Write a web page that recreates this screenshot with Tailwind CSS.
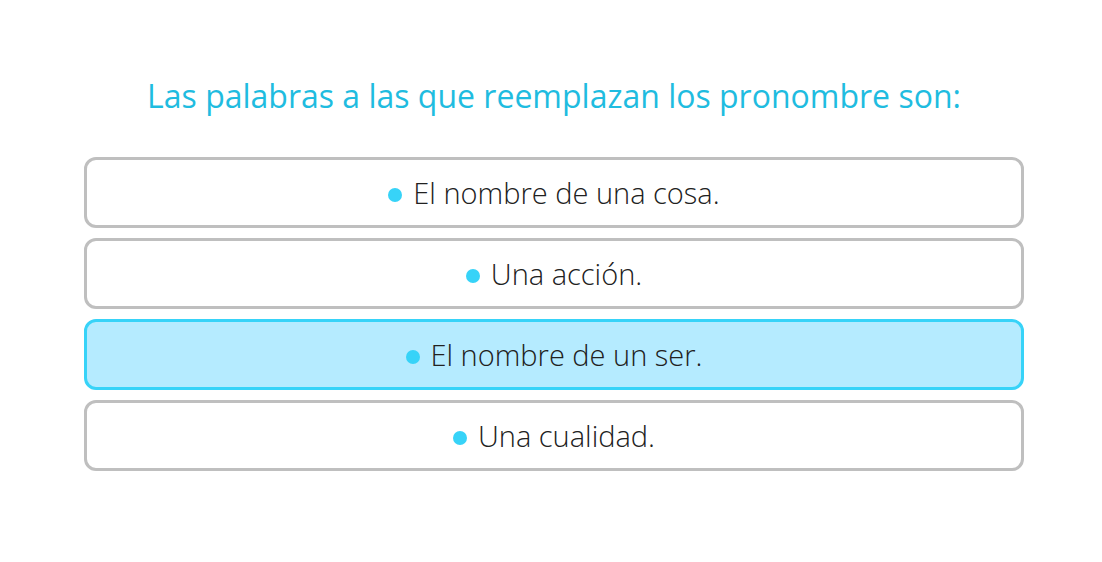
<!DOCTYPE html>
<html lang="es">
<head>
<meta charset="utf-8">
<title>Pronombres</title>
<script src="https://cdn.jsdelivr.net/npm/@tailwindcss/browser@4"></script>
</head>
<body class="bg-white font-['Open_Sans','Noto_Sans',sans-serif] text-[#212121]">
<main class="pt-[72px] pr-[78px] pl-[84px]">
<h1 class="text-center text-[32px] leading-[48px] text-[#1fbce0]">Las palabras a las que reemplazan los pronombre son:</h1>
<div class="mt-[37px] flex flex-col gap-[10px]">
<button type="button" class="flex w-full items-center justify-center gap-[11px] rounded-[12px] border-3 border-[#bfbfbf] bg-white py-[10px] text-[29px] leading-[45px] font-[350]"><span class="mt-[5px] size-[14px] rounded-full bg-[#37d3f8]"></span><span>El nombre de una cosa.</span></button>
<button type="button" class="flex w-full items-center justify-center gap-[11px] rounded-[12px] border-3 border-[#bfbfbf] bg-white py-[10px] text-[29px] leading-[45px] font-[350]"><span class="mt-[5px] size-[14px] rounded-full bg-[#37d3f8]"></span><span>Una acción.</span></button>
<button type="button" aria-pressed="true" class="flex w-full items-center justify-center gap-[11px] rounded-[12px] border-3 border-[#37d3f8] bg-[#b5ebff] py-[10px] text-[29px] leading-[45px] font-[350]"><span class="mt-[5px] size-[14px] rounded-full bg-[#37d3f8]"></span><span>El nombre de un ser.</span></button>
<button type="button" class="flex w-full items-center justify-center gap-[11px] rounded-[12px] border-3 border-[#bfbfbf] bg-white py-[10px] text-[29px] leading-[45px] font-[350]"><span class="mt-[5px] size-[14px] rounded-full bg-[#37d3f8]"></span><span>Una cualidad.</span></button>
</div>
</main>
</body>
</html>
